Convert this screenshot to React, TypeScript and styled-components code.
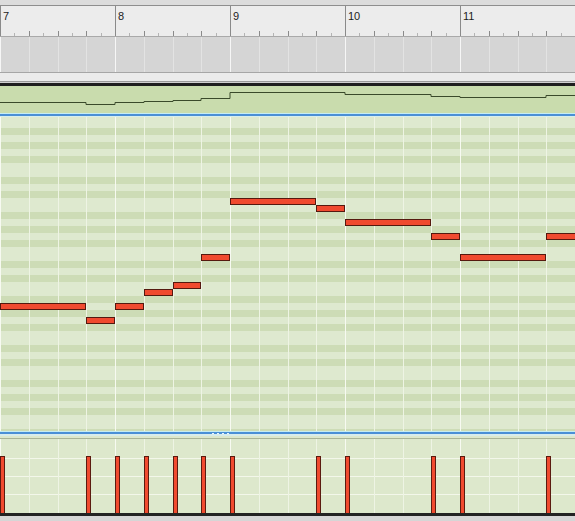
import React from "react";
import styled, { createGlobalStyle } from "styled-components";

const BEAT = 28.75;
const ROW = 7;
const BEATS = 20;

const Global = createGlobalStyle`
  html, body { margin: 0; padding: 0; background: #d6d6d6; overflow: hidden; }
  body { font-family: "Liberation Sans", Arial, sans-serif; }
`;

const Frame = styled.div`
  width: 575px;
  height: 521px;
  display: flex;
  flex-direction: column;
  overflow: hidden;
`;

const Band = styled.div<{ $h: number; $bg: string }>`
  flex: 0 0 ${(p) => p.$h}px;
  background: ${(p) => p.$bg};
`;

const Ruler = styled.div`
  flex: 0 0 30px;
  display: flex;
  background: #ececec;
`;

const RulerBar = styled.div`
  flex: 0 0 115px;
  box-sizing: border-box;
  border-left: 1px solid #8a8a8a;
  display: flex;
  flex-direction: column;
  justify-content: space-between;
`;

const BarLabel = styled.span`
  font-size: 11px;
  line-height: 12px;
  color: #1c1c1c;
  padding: 4px 0 0 2px;
`;

const TickSvg = styled.svg`
  display: block;
`;

const Overview = styled.div`
  flex: 0 0 35px;
  position: relative;
  background: #d5d5d5;
`;

const BeatGrid = styled.div`
  position: absolute;
  inset: 0;
  display: flex;
  pointer-events: none;
`;

const BeatCol = styled.div<{ $line: string }>`
  flex: 1 1 0;
  border-left: 1px solid ${(p) => p.$line};
`;

const AutoLane = styled.div`
  flex: 0 0 27px;
  background: #c9dcad;
`;

const LaneSvg = styled.svg`
  display: block;
`;

const keyColors = (() => {
  const light = "#dee9cf";
  const dark = "#cddcb6";
  const black = [2, 4, 6, 9, 11];
  const stops: string[] = [];
  for (let i = 0; i < 12; i++) {
    const c = black.includes(i) ? dark : light;
    stops.push(`${c} ${i * ROW}px ${(i + 1) * ROW}px`);
  }
  return `linear-gradient(to bottom, ${stops.join(", ")})`;
})();

const Roll = styled.div`
  flex: 0 0 314px;
  position: relative;
  background-image: ${keyColors};
  background-size: 100% 84px;
  background-position: 0 81px;
`;

const Note = styled.div`
  position: absolute;
  height: 7px;
  box-sizing: border-box;
  background: #f04a2f;
  border: 1px solid #55190f;
`;

const Splitter = styled.div`
  flex: 0 0 8px;
  position: relative;
  display: flex;
  flex-direction: column;
`;

const Grip = styled.div`
  position: absolute;
  left: 212px;
  top: 1px;
  height: 2px;
  display: flex;
  align-items: center;
  gap: 3px;
`;

const GripDot = styled.span`
  width: 2px;
  height: 1px;
  background: #e8f4ff;
`;

const VelLane = styled.div`
  flex: 0 0 74px;
  position: relative;
  background-color: #dde8cc;
  background-image: linear-gradient(
    to bottom,
    transparent 0 19px,
    #f3f7ea 19px 20px,
    transparent 20px 37px,
    #f3f7ea 37px 38px,
    transparent 38px 55px,
    #f3f7ea 55px 56px,
    transparent 56px
  );
`;

const VelBar = styled.div`
  position: absolute;
  top: 17px;
  bottom: 0;
  width: 5px;
  box-sizing: border-box;
  background: #f04a2f;
  border: 1px solid #5a1a10;
  border-bottom: none;
`;

type NoteData = { start: number; len: number; row: number };

const notes: NoteData[] = [
  { start: 0, len: 3, row: 15 },
  { start: 3, len: 1, row: 17 },
  { start: 4, len: 1, row: 15 },
  { start: 5, len: 1, row: 13 },
  { start: 6, len: 1, row: 12 },
  { start: 7, len: 1, row: 8 },
  { start: 8, len: 3, row: 0 },
  { start: 11, len: 1, row: 1 },
  { start: 12, len: 3, row: 3 },
  { start: 15, len: 1, row: 5 },
  { start: 16, len: 3, row: 8 },
  { start: 19, len: 1.2, row: 5 },
];

const autoSteps: [number, number, number][] = [
  [0, 3, 16.5],
  [3, 4, 18.5],
  [4, 5, 16.5],
  [5, 6, 15.5],
  [6, 7, 14.5],
  [7, 8, 12.5],
  [8, 12, 6.5],
  [12, 15, 8.5],
  [15, 16, 10.5],
  [16, 19, 11.5],
  [19, 20, 9.5],
];

const px = (b: number) => Math.round(b * BEAT);

function Grid({ beat, bar }: { beat: string; bar: string }) {
  return (
    <BeatGrid>
      {Array.from({ length: BEATS }, (_, i) => (
        <BeatCol key={i} $line={i % 4 === 0 ? bar : beat} />
      ))}
    </BeatGrid>
  );
}

function Ticks() {
  const lines: React.ReactNode[] = [];
  for (let i = 1; i < 8; i++) {
    const x = Math.round(i * BEAT / 2) - 0.5;
    const big = i % 2 === 0;
    lines.push(
      <line
        key={i}
        x1={x}
        x2={x}
        y1={big ? 0 : 2}
        y2={5}
        stroke={big ? "#8a8a8a" : "#b4b4b4"}
        strokeWidth={1}
      />
    );
  }
  return (
    <TickSvg width={114} height={5}>
      {lines}
    </TickSvg>
  );
}

function autoPath() {
  let d = "";
  autoSteps.forEach(([a, b, y], i) => {
    const x1 = px(a);
    const x2 = px(b);
    d += i === 0 ? `M${x1} ${y}` : ` L${x1} ${y}`;
    d += ` L${x2} ${y}`;
  });
  return d;
}

export default function App() {
  return (
    <>
      <Global />
      <Frame>
        <Band $h={5} $bg="#dcdcdc" />
        <Band $h={1} $bg="#8e8e8e" />
        <Ruler>
          {[7, 8, 9, 10, 11].map((n) => (
            <RulerBar key={n}>
              <BarLabel>{n}</BarLabel>
              <Ticks />
            </RulerBar>
          ))}
        </Ruler>
        <Band $h={1} $bg="#a9a9a9" />
        <Overview>
          <Grid beat="#e3e3e3" bar="#f6f6f6" />
        </Overview>
        <Band $h={1} $bg="#a6a6a6" />
        <Band $h={8} $bg="#ebebeb" />
        <Band $h={1} $bg="#9a9a9a" />
        <Band $h={1} $bg="#d0d0d0" />
        <Band $h={3} $bg="#1f1f1f" />
        <AutoLane>
          <LaneSvg width={575} height={27}>
            <path d={autoPath()} fill="none" stroke="#3a4a2a" strokeWidth={1} />
          </LaneSvg>
        </AutoLane>
        <Band $h={1} $bg="#c4ecf4" />
        <Band $h={2} $bg="#4a8fd6" />
        <Band $h={1} $bg="#d6eeee" />
        <Roll>
          <Grid beat="#eef4e4" bar="#f7faf1" />
          {notes.map((n, i) => (
            <Note
              key={i}
              style={{
                left: px(n.start),
                width: px(n.start + n.len) - px(n.start),
                top: 81 + n.row * ROW,
              }}
            />
          ))}
        </Roll>
        <Splitter>
          <Band $h={1} $bg="#c4ecf4" />
          <Band $h={2} $bg="#4a8fd6" />
          <Band $h={2} $bg="#d8ecec" />
          <Band $h={2} $bg="#dde8cc" />
          <Band $h={1} $bg="#a9b497" />
          <Grip>
            {[0, 1, 2, 3].map((i) => (
              <GripDot key={i} />
            ))}
          </Grip>
        </Splitter>
        <VelLane>
          <Grid beat="#eef4e4" bar="#f7faf1" />
          {notes.map((n, i) => (
            <VelBar key={i} style={{ left: px(n.start) }} />
          ))}
        </VelLane>
        <Band $h={3} $bg="#232323" />
        <Band $h={5} $bg="#d6d6d6" />
      </Frame>
    </>
  );
}
